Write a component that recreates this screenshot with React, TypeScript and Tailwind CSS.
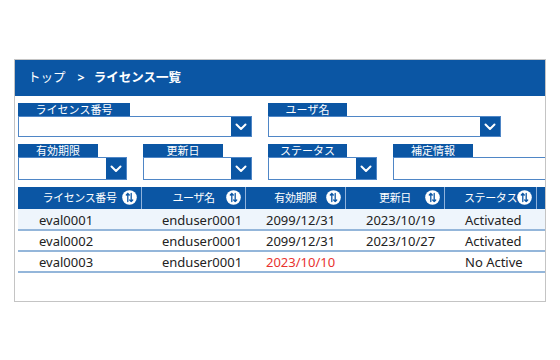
import React from "react";

const font = { fontFamily: '"Noto Sans", "Noto Sans CJK JP", sans-serif' };

function Chevron() {
  return (
    <svg width="12" height="8" viewBox="0 0 12 8">
      <path d="M1.5 1.5 L6 6 L10.5 1.5" fill="none" stroke="white" strokeWidth="2" strokeLinecap="round" strokeLinejoin="round" />
    </svg>
  );
}

function SortIcon() {
  return (
    <svg width="15" height="15" viewBox="0 0 15 15">
      <circle cx="7.5" cy="7.5" r="7.3" fill="white" />
      <path d="M5.8 3.5 V11.5 M4.3 5 L5.8 3.4 L7.3 5" fill="none" stroke="#0b56a4" strokeWidth="1.3" strokeLinecap="round" strokeLinejoin="round" />
      <path d="M9.2 3.5 V11.5 M7.7 10 L9.2 11.6 L10.7 10" fill="none" stroke="#0b56a4" strokeWidth="1.3" strokeLinecap="round" strokeLinejoin="round" />
    </svg>
  );
}

function Field({ label, tabW, w, h, dropdown = true }: { label: string; tabW: string; w: string; h: string; dropdown?: boolean }) {
  return (
    <div className={`flex flex-col shrink-0 ${w}`}>
      <div className={`h-[13px] ${tabW} bg-[#0b56a4] text-white text-[11px] leading-[13px] text-center`}>{label}</div>
      <div className={`flex ${h} border border-[#4f86c6] bg-white`}>
        <div className="flex-1" />
        {dropdown && (
          <div className="w-[20px] h-full bg-[#0b56a4] flex items-center justify-center">
            <Chevron />
          </div>
        )}
      </div>
    </div>
  );
}

const cols = [
  { name: "ライセンス番号", w: "w-[123px]" },
  { name: "ユーザ名", w: "w-[104px]" },
  { name: "有効期限", w: "w-[100px]" },
  { name: "更新日", w: "w-[99px]" },
  { name: "ステータス", w: "w-[92px]" },
];

const rows = [
  ["eval0001", "enduser0001", "2099/12/31", "2023/10/19", "Activated"],
  ["eval0002", "enduser0001", "2099/12/31", "2023/10/27", "Activated"],
  ["eval0003", "enduser0001", "2023/10/10", "", "No Active"],
];

export default function App() {
  return (
    <div className="w-[560px] h-[360px] bg-white pt-[59px] pl-[14px]" style={font}>
      <div className="w-[532px] h-[243px] border border-[#c4c4c4] overflow-hidden flex flex-col">
        <div className="h-[36px] bg-[#0b56a4] flex items-center pl-[13px] text-white text-[12.5px] shrink-0">
          <span>トップ</span>
          <span className="ml-[12px] font-bold">&gt;</span>
          <span className="ml-[9px] font-bold">ライセンス一覧</span>
        </div>
        <div className="pl-[3px] pt-[7px] flex flex-col">
          <div className="flex gap-[16px]">
            <Field label="ライセンス番号" tabW="w-[112px]" w="w-[234px]" h="h-[21px]" />
            <Field label="ユーザ名" tabW="w-[79px]" w="w-[233px]" h="h-[21px]" />
          </div>
          <div className="flex gap-[16px] mt-[7px]">
            <Field label="有効期限" tabW="w-[80px]" w="w-[109px]" h="h-[23px]" />
            <Field label="更新日" tabW="w-[80px]" w="w-[109px]" h="h-[23px]" />
            <Field label="ステータス" tabW="w-[79px]" w="w-[109px]" h="h-[23px]" />
            <Field label="補定情報" tabW="w-[80px]" w="w-[160px]" h="h-[23px]" dropdown={false} />
          </div>
          <div className="mt-[7px] w-[560px]">
            <div className="flex h-[22px] bg-[#0b56a4]">
              {cols.map((c, i) => (
                <div
                  key={c.name}
                  className={`relative ${c.w} shrink-0 h-full flex items-center justify-center text-white text-[11px] tracking-[-0.4px] ${i > 0 ? "border-l border-[#8fb2dc]" : ""}`}
                >
                  <span>{c.name}</span>
                  <span className="absolute right-[4px] top-[3px] flex">
                    <SortIcon />
                  </span>
                </div>
              ))}
              <div className="flex-1 border-l border-[#8fb2dc]" />
            </div>
            {rows.map((r, ri) => (
              <div
                key={ri}
                className={`flex ${ri === 0 ? "h-[22px] bg-[#eef5fc]" : "h-[21px] bg-white"} pt-[3px] border-b-2 border-[#94b6da] text-[13px] text-[#222]`}
              >
                {r.map((v, ci) => (
                  <div
                    key={ci}
                    className={`${cols[ci].w} shrink-0 flex items-center pl-[21px] ${ri === 2 && ci === 2 ? "text-[#e8322f]" : ""}`}
                  >
                    {v}
                  </div>
                ))}
              </div>
            ))}
          </div>
        </div>
      </div>
    </div>
  );
}
